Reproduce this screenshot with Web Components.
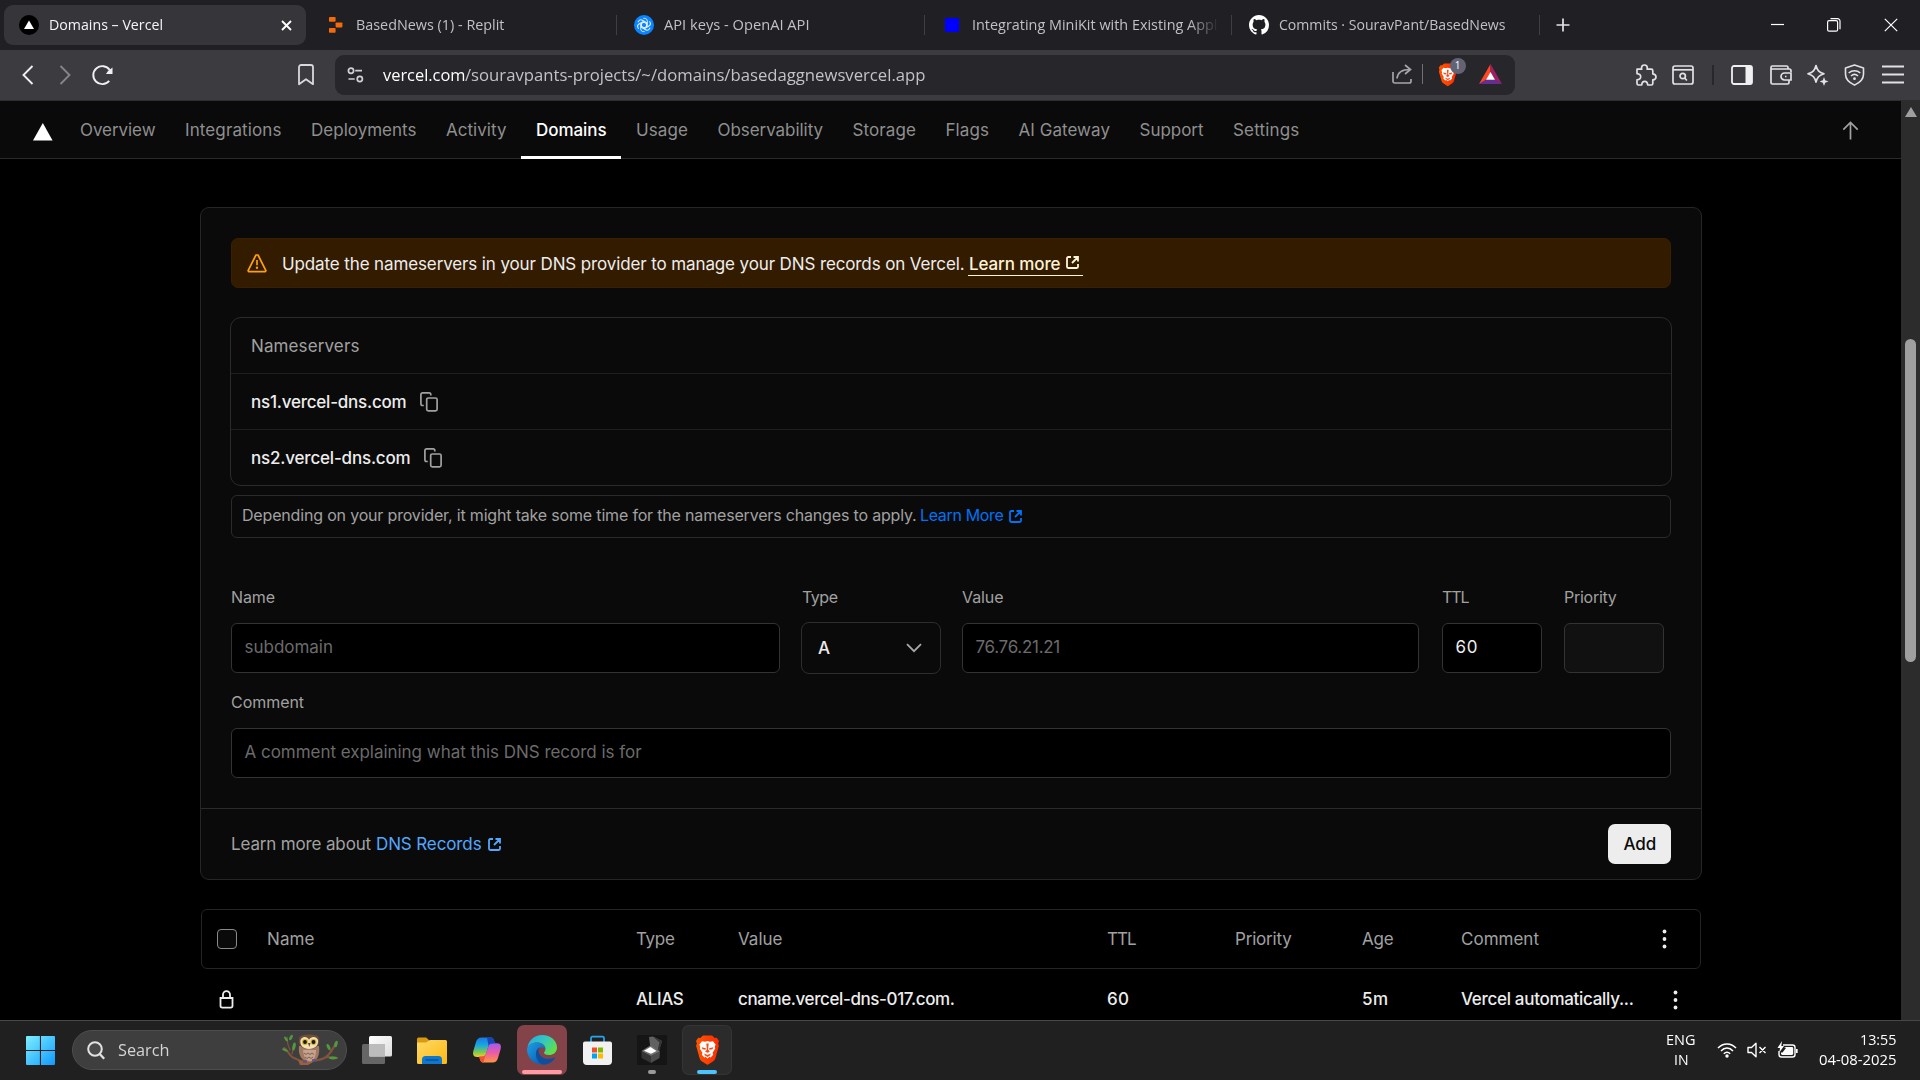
<!DOCTYPE html>
<html lang="en">
<head>
<meta charset="utf-8">
<title>Domains – Vercel</title>
<style>
html,body{margin:0;background:#000;overflow:hidden}
body{width:1920px;height:1080px;font-family:Inter,"Liberation Sans",sans-serif;font-size:17px;color:#ededed}
</style>
</head>
<body>
<desktop-screen></desktop-screen>
<script>
const fitted = [];

/* Text run whose ink fills the given width, by tracking or (mode="scale") by condensing. */
class FitText extends HTMLElement {
  constructor() {
    super();
    this.attachShadow({ mode: 'open' }).innerHTML =
      '<style>:host{display:inline-block;flex:none;white-space:nowrap;line-height:1.3}span{display:inline-block;transform-origin:0 50%}</style><span><slot></slot></span>';
    fitted.push(this);
  }
  fit() {
    const w = parseFloat(this.getAttribute('w'));
    if (!w) return;
    const span = this.shadowRoot.querySelector('span');
    const natural = span.getBoundingClientRect().width;
    const target = w + 0.5;
    if (this.getAttribute('mode') === 'scale') span.style.transform = `scaleX(${target / natural})`;
    else span.style.letterSpacing = (target - natural) / this.textContent.length + 'px';
    this.style.width = w + 'px';
  }
}
customElements.define('fit-text', FitText);

const LION = '<path fill="#fff" d="M7 6.2l3.2.6L12.500 6l2.300.8 3.200-.6 2.600 3.200-.8 2.400.4 1.800-2.600 4.200.6 2-2.600 2.600-1.200-.6-1.900 1.600-1.900-1.600-1.200.6-2.600-2.600.6-2-2.600-4.200.4-1.800-.8-2.400z"/><path fill="#fb4a14" d="M6.600 12.200l4.300 1-.3 1.500-3-.4zM18.400 12.200l-4.300 1 .3 1.500 3-.4zM11.300 8.500h2.400l-.6 6 1.700 2.300-2.300 1-2.300-1 1.700-2.300zM9.200 18.600l3.300 1.500 3.300-1.500-.6 1.700-2.700 1.800-2.700-1.800z"/>';
const SHIELD = 'M5.200 3L8 .6h9L19.800 3l2-.2L24 6l-.9 2.500.8 2.300-3.500 12.400c-.5 1.700-1.500 2.500-2.500 3.200l-4.300 2.900c-.7.5-1.500.5-2.200 0l-4.300-2.900c-1-.7-2-1.500-2.500-3.200L1.100 10.800l.8-2.300L1 6l2.200-3.200z';

const ICONS = {
  vercelDot: [20, 20, '<circle cx="10" cy="10" r="10" fill="#000"/><path d="M10 5.500l5 8.500H5z" fill="#fff"/>'],
  replit: [14, 16, '<g fill="#f56a0a"><rect x="0" y="0" width="6.600" height="4.800" rx=".8"/><rect x="6.600" y="5.400" width="6.800" height="5" rx=".8"/><rect x="0" y="11" width="6.600" height="4.800" rx=".8"/></g>'],
  openai: [20, 20, '<circle cx="10" cy="10" r="10" fill="#0a84ff"/><g fill="none" stroke="#e6f3ff" stroke-width="1">' + [0, 60, 120, 180, 240, 300].map(a => `<path d="M9.400 3.400h1.200c1.700 0 2.700 1.300 2.700 2.800v4.700L10 12.900" transform="rotate(${a} 10 10)"/>`).join('') + '</g>'],
  blue: [14, 14, '<rect width="14" height="14" fill="#00f"/>'],
  github: [20, 20, '<path transform="scale(1.25)" fill="#fff" d="M8 0C3.580 0 0 3.580 0 8c0 3.540 2.290 6.530 5.470 7.590.4.070.55-.17.55-.38 0-.19-.01-.82-.01-1.490-2.010.37-2.530-.49-2.690-.94-.09-.23-.48-.94-.82-1.130-.28-.15-.68-.52-.01-.53.63-.01 1.080.58 1.230.82.72 1.210 1.870.87 2.330.66.07-.52.28-.87.51-1.070-1.780-.2-3.640-.89-3.640-3.950 0-.87.31-1.590.82-2.150-.08-.2-.36-1.020.08-2.120 0 0 .67-.21 2.200.82.64-.18 1.320-.27 2-.27s1.360.09 2 .27c1.530-1.040 2.200-.82 2.200-.82.44 1.100.16 1.920.08 2.120.51.56.82 1.270.82 2.150 0 3.070-1.870 3.750-3.650 3.950.29.25.54.73.54 1.480 0 1.070-.01 1.930-.01 2.200 0 .21.15.46.55.38A8.010 8.010 0 0016 8c0-4.420-3.580-8-8-8z"/>'],
  close: [11, 11, '<path d="M1 1l9 9M10 1L1 10" stroke="#fff" stroke-width="1.900"/>'],
  plus: [14, 14, '<path d="M7 .5v13M.5 7h13" stroke="#e4e4e8" stroke-width="1.700"/>'],
  min: [14, 14, '<path d="M0 6.500h13" stroke="#fff" stroke-width="1.200"/>'],
  restore: [14, 14, '<rect x=".6" y="2.700" width="10" height="10.500" rx="1.500" fill="none" stroke="#fff" stroke-width="1.200"/><path d="M3.500 .7h7a2.500 2.500 0 0 1 2.500 2.500v8" fill="none" stroke="#fff" stroke-width="1.200"/>'],
  x: [14, 14, '<path d="M.8.800l12.400 12.400M13.200.800L.8 13.200" stroke="#fff" stroke-width="1.200"/>'],
  back: [12, 20, '<path d="M10.500 1L1.500 10l9 9" fill="none" stroke="#f0f0f3" stroke-width="1.900"/>'],
  fwd: [12, 20, '<path d="M1.500 1l9 9-9 9" fill="none" stroke="#85858a" stroke-width="1.900"/>'],
  reload: [23, 22, '<path d="M18.200 16.900A9 9 0 1 1 18.700 6" fill="none" stroke="#f0f0f3" stroke-width="1.900"/><path d="M21.500 3.500v6.500h-6.500l2-3z" fill="#f0f0f3"/>'],
  bookmark: [16, 22, '<path d="M1 3.200A2.200 2.200 0 0 1 3.200 1h9.600A2.200 2.200 0 0 1 15 3.200v17L8 15.200 1 20.200z" fill="none" stroke="#d9d9dd" stroke-width="1.800" stroke-linejoin="round"/>'],
  tune: [17, 16, '<g fill="none" stroke="#d0d0d5" stroke-width="1.700"><circle cx="4" cy="3.700" r="2.600"/><path d="M8.200 3.700H15M1.500 12h6.200"/><circle cx="12.800" cy="12" r="2.600"/></g>'],
  share: [20, 20, '<path d="M1 8v9.300A1.700 1.700 0 0 0 2.700 19h14.600a1.700 1.700 0 0 0 1.700-1.700V15M5 14.500C5.500 9 9 5.500 18 5.500M13 1l5.500 4.500L13 10" fill="none" stroke="#a5a5ab" stroke-width="1.700"/>'],
  brave: [25, 30, `<defs><linearGradient id="b" x2="1"><stop offset="0" stop-color="#ff5601"/><stop offset="1" stop-color="#ff2a00"/></linearGradient></defs><path d="${SHIELD}" fill="url(#b)"/>${LION}`],
  bat: [23, 20, '<path d="M11.500 0L0 20l7-4 4.500-7.500z" fill="#ff4724"/><path d="M11.500 0L23 20l-7-4-4.500-7.500z" fill="#9e1f63"/><path d="M0 20h23l-7-4.500H7z" fill="#662d91"/><path d="M11.500 8L7 15.800h9z" fill="#fff"/>'],
  puzzle: [22, 22, '<path d="M2 5.200h4.700c-.8-2.600.8-4.200 2.700-4.200s3.500 1.600 2.700 4.200h4.200a1.500 1.500 0 0 1 1.500 1.500v3.200c2 .3 3.200 1.500 3.200 3s-1.200 2.700-3.200 3v3.600a1.500 1.500 0 0 1-1.500 1.500h-3.600c-.2-2.500-1.300-3.700-3-3.700S6.900 18.500 6.700 21H3.500A1.500 1.500 0 0 1 2 19.500v-3.700c2.300-.1 3.700-1.200 3.700-3S4.300 9.900 2 9.700z" fill="none" stroke="#e2e2e6" stroke-width="1.700" stroke-linejoin="round"/>'],
  panelSearch: [22, 20, '<g fill="none" stroke="#e2e2e6" stroke-width="1.700"><rect x="1" y="1" width="20" height="18" rx="2"/><path d="M1 4.800h20"/><circle cx="10.700" cy="11" r="2.700"/><path d="M12.600 13l2.300 2.500"/></g>'],
  sidebar: [22, 20, '<rect x="1" y="1" width="20" height="18" rx="2" fill="none" stroke="#f0f0f3" stroke-width="1.800"/><path d="M14.500 1h5a1.500 1.500 0 0 1 1.500 1.500v15a1.500 1.500 0 0 1-1.500 1.500h-5z" fill="#f0f0f3"/>'],
  wallet: [22, 20, '<g fill="none" stroke="#e2e2e6" stroke-width="1.700"><path d="M21 7V5.700A1.700 1.700 0 0 0 19.300 4H1M18 4V2.500A1.500 1.500 0 0 0 16.500 1h-14A1.500 1.500 0 0 0 1 2.500v15A1.500 1.500 0 0 0 2.500 19h15a1.500 1.500 0 0 0 1.500-1.500V15"/><path d="M21 8h-6.500a3.200 3.200 0 0 0 0 7H21z"/><path d="M15 11.500h1.500"/></g>'],
  leo: [22, 22, '<path d="M9 1.500c1.300 5 2.700 6.600 8 8.300-5.300 1.700-6.700 3.300-8 8.300-1.300-5-2.700-6.600-8-8.300 5.300-1.700 6.700-3.300 8-8.300z" fill="none" stroke="#e2e2e6" stroke-width="1.700" stroke-linejoin="round"/><path d="M17 13l1.200 3.200 3.200 1.300-3.200 1.300L17 22l-1.200-3.200-3.200-1.300 3.200-1.300z" fill="#e2e2e6"/>'],
  vpn: [21, 22, '<g fill="none" stroke="#e2e2e6" stroke-width="1.600"><path d="M10.500 1l9 2.900v6.300c0 5-3.500 8.300-9 10.900-5.500-2.600-9-5.900-9-10.900V3.900z" stroke-linejoin="round"/><path d="M4.700 9c3.400-3 8.200-3 11.600 0M7 12c2.200-2 4.800-2 7 0"/></g><circle cx="10.500" cy="14.700" r="1.400" fill="#e2e2e6"/>'],
  menu: [22, 19, '<path d="M0 1.500h22M0 9.500h22M0 17.500h22" stroke="#e2e2e6" stroke-width="2"/>'],
  triangle: [20, 18, '<path d="M9.800 0l9.800 17.500H0z" fill="#fff"/>'],
  up: [17, 19, '<path d="M8.500 18.500V1.500M1.300 8.700L8.500 1.500l7.200 7.200" fill="none" stroke="#a1a1a1" stroke-width="1.700"/>'],
  warn: [20, 19, '<path d="M9 1h2l7.900 15.700-.5 1H1.600l-.5-1z" fill="none" stroke="#ff9f0a" stroke-width="1.700" stroke-linejoin="round"/><path d="M10 6v5.200" stroke="#ff9f0a" stroke-width="1.700"/><circle cx="10" cy="13.800" r="1.200" fill="#ff9f0a"/>'],
  ext: [13, 13, '<path d="M5 1H2.200A1.200 1.200 0 0 0 1 2.200v8.600A1.200 1.200 0 0 0 2.200 12h8.600a1.200 1.200 0 0 0 1.200-1.200V8M7.500 1H12v4.500M12 1L6 7" fill="none" stroke="currentColor" stroke-width="1.800"/>'],
  copy: [18, 20, '<g fill="none" stroke="#a1a1a1" stroke-width="1.700"><path d="M3.800 13.500H2.600A1.700 1.700 0 0 1 .9 11.800V2.600A1.700 1.700 0 0 1 2.600.9h6.500a1.700 1.700 0 0 1 1.700 1.700v.9"/><rect x="6.700" y="6" width="10.400" height="12.800" rx="1.600"/></g>'],
  chev: [16, 10, '<path d="M1 1.200l7 7 7-7" fill="none" stroke="#a8a8a8" stroke-width="1.800"/>'],
  lock: [15, 19, '<path d="M1.500 8h12v7.800a1.800 1.800 0 0 1-1.800 1.800H3.300a1.800 1.800 0 0 1-1.800-1.800zM4 8V4.600a3.500 3.500 0 0 1 7 0V8" fill="none" stroke="#ededed" stroke-width="1.800"/>'],
  dots: [5, 20, '<g fill="#ededed"><circle cx="2.500" cy="2.500" r="1.900"/><circle cx="2.500" cy="10" r="1.900"/><circle cx="2.500" cy="17.500" r="1.900"/></g>'],
  start: [29, 29, '<defs><linearGradient id="s" x2="1" y2="1"><stop offset="0" stop-color="#7df0ff"/><stop offset="1" stop-color="#1199ff"/></linearGradient></defs><path d="M1 0h12.900v13.900H0V1a1 1 0 0 1 1-1zM15 0h13a1 1 0 0 1 1 1v12.900H15zM0 15h13.900v14H1a1 1 0 0 1-1-1zM15 15h14v13a1 1 0 0 1-1 1H15z" fill="url(#s)"/>'],
  search: [18, 19, '<circle cx="8" cy="8" r="6.800" fill="#55555580" stroke="#e2e2e2" stroke-width="2"/><path d="M12.700 13l4.500 4.700" stroke="#e2e2e2" stroke-width="2.300"/>'],
  owl: [56, 32, '<g fill="none" stroke="#80533c" stroke-linecap="round"><path d="M2 14c3 1 4 5 7 8s9 4 13 6" stroke-width="2"/><path d="M5 3c0 6 1 9 3 13M12 11l-2 9" stroke-width="1.200"/><path d="M18 28c12-2 19 0 26-5 4-3 6-6 10-14M44 23l11 1" stroke-width="2.200"/><path d="M49 18l-2-4" stroke-width="1.200"/></g><path d="M16 26l11 2 6-1-7 4h-8z" fill="#9c6040"/><g fill="#4f9b3c"><ellipse cx="9" cy="3.500" rx="1.400" ry="3" transform="rotate(28 9 3.500)"/><ellipse cx="4" cy="5" rx="1.200" ry="2.800" transform="rotate(-35 4 5)"/><ellipse cx="12" cy="12.500" rx="1.600" ry="4" transform="rotate(12 12 12.500)"/><ellipse cx="3" cy="16" rx="1.200" ry="3" transform="rotate(-65 3 16)"/><ellipse cx="54" cy="10" rx="1.600" ry="3.400" transform="rotate(15 54 10)"/><ellipse cx="46.500" cy="13" rx="1.500" ry="3.300" transform="rotate(-25 46.500 13)"/><ellipse cx="51" cy="24" rx="4" ry="1.400"/></g><path d="M17 12c-1 8 2 16 10.500 16S38 20 37 12z" fill="#a07a63"/><path d="M21 16c1 8 3 11 7 11s6-5 6-11z" fill="#c5a28b"/><path d="M22 19l2 1.500 2-1.500 2 1.500 2-1.500 2 1.500M23 23l2 1.500 2-1.500 2 1.500 2-1.500" fill="none" stroke="#80604e"/><path d="M17.500 3c3-3.500 17-3.500 19 0 2 6 0 12-9.500 12s-11.500-6-9.500-12z" fill="#6f4d37"/><path d="M18.500 6c2-5 8-3 8.500 0 .5-3 7-5 9 0 1 5-3 9-9 9s-9.500-4-8.500-9z" fill="#f3dfb6"/><circle cx="23" cy="8" r="3" fill="#d3b52c"/><circle cx="31.500" cy="8" r="3" fill="#d3b52c"/><circle cx="23" cy="8" r="1.900" fill="#1b1711"/><circle cx="31.500" cy="8" r="1.900" fill="#1b1711"/><path d="M26 9h2.500l-1.200 4z" fill="#59483c"/><path d="M22 26v3M24 26v3M31 25v3M33 25v3" stroke="#5b4a91" stroke-width="1.500"/>'],
  taskview: [30, 28, '<defs><linearGradient id="tv" x2="1" y2="1"><stop offset="0" stop-color="#fff"/><stop offset="1" stop-color="#ddd"/></linearGradient></defs><rect y="8" width="23" height="20" rx="1.500" fill="#666"/><rect x="7" width="23" height="20.500" rx="1.500" fill="url(#tv)"/><path d="M7 8h16v12.500H8.500A1.500 1.500 0 0 1 7 19z" fill="#bcbcbc"/>'],
  folder: [30, 27, '<defs><linearGradient id="f" x2="1" y2="1"><stop offset="0" stop-color="#ffda65"/><stop offset="1" stop-color="#fcb813"/></linearGradient></defs><path d="M0 2A1.500 1.500 0 0 1 1.500.5h7.700L13 4v6H0z" fill="#d99a10"/><path d="M0 5.500h9L13 3h15.500A1.500 1.500 0 0 1 30 4.500V25.500a1.500 1.500 0 0 1-1.500 1.500h-27A1.500 1.500 0 0 1 0 25.500z" fill="url(#f)"/><path d="M5 27v-4.500A3.500 3.500 0 0 1 8.500 19h13a3.500 3.500 0 0 1 3.500 3.500V27z" fill="#0f77cd"/><path d="M8.500 23h13" stroke="#0a4c8d" stroke-width="1.300"/>'],
  copilot: [28, 26, '<defs><linearGradient id="c1" x2="0" y2="1"><stop offset="0" stop-color="#1d75e8"/><stop offset=".4" stop-color="#17a9e0"/><stop offset=".75" stop-color="#7cc850"/><stop offset="1" stop-color="#f2ce22"/></linearGradient><linearGradient id="c2" x2="0" y2="1"><stop offset="0" stop-color="#a25bf0"/><stop offset=".5" stop-color="#ec5ba6"/><stop offset="1" stop-color="#ff963f"/></linearGradient></defs><path d="M14 .5h4c2 0 2.500 1.500 3 3l1 3h-3c-2 0-3 1-3.600 3L13 17c-.6 2-2 3-4 3H4C0 20-.5 17 .5 13.500L3 5C4 2 5.500.5 8.500.5z" fill="url(#c1)"/><path d="M14 25.500h-4c-2 0-2.500-1.500-3-3L6.200 19.500H9c2 0 3.300-1 4-3L15.500 9c.6-2 2-2.700 4-2.700H24c4 0 4.500 3 3.500 6.200L25 21c-1 3-2.500 4.500-5.500 4.500z" fill="url(#c2)"/><path d="M14 .5h4c2 0 2.500 1.500 3 3l1 3h-3c-2 0-3 1-3.400 2.500z" fill="#1845b8"/><path d="M7 22.500l-.8-3H9c2 0 3-.8 3.600-2.500L10.500 25.400C8.500 25.500 7.500 24 7 22.500z" fill="#f4512d"/>'],
  edge: [30, 30, '<defs><linearGradient id="e1" x2="1" y2=".6"><stop offset="0" stop-color="#24a8e8"/><stop offset=".55" stop-color="#35c8bc"/><stop offset="1" stop-color="#5fe04b"/></linearGradient><linearGradient id="e2" y2="1" x2="1"><stop offset="0" stop-color="#1aa0e6"/><stop offset="1" stop-color="#0a53ab"/></linearGradient></defs><path d="M.5 12C2 5 7.500 0 15 0c9 0 15 6 15 12.500 0 5-4 7.500-8 7.500-3.500 0-5-1.200-5-2.200 0-.8 1.400-1.400 1.400-3.800 0-4-4-6.500-8.400-6.500C5 7.500 2 10 .5 12z" fill="url(#e1)"/><path d="M0 15C0 10 4.500 7.500 10 7.500c4.500 0 8.400 2.500 8.400 6.500 0 0-1.500-2.300-4.400-1.800C10 13 8.500 16.500 9 20c.7 5 5 8.500 10 8.700A15 15 0 0 1 0 15z" fill="url(#e2)"/><path d="M9 20c-.3-3.500 1-6.500 4-7.500-1.600 1.500-1.700 3.500-1 5.500C14 23 20.500 25.500 27.500 22.500c.4 0 .7.500.4.800C25 28 20 30 15.500 29.500 12 28 9.500 24.500 9 20z" fill="#0e4f9d"/>'],
  store: [29, 29, '<path d="M8 6V2a1.300 1.300 0 0 1 1.300-1.300h10.400A1.300 1.300 0 0 1 21 2v4" fill="none" stroke="#24a7f2" stroke-width="1.700"/><path d="M0 7.500A2 2 0 0 1 2 5.500h25a2 2 0 0 1 2 2V25a4 4 0 0 1-4 4H4a4 4 0 0 1-4-4z" fill="#f1f1f1"/><path d="M9 11.500h5v5H9z" fill="#f25022"/><path d="M15 11.500h5v5h-5z" fill="#7fba00"/><path d="M9 17.500h5v5H9z" fill="#00a4ef"/><path d="M15 17.500h5v5h-5z" fill="#ffb900"/>'],
  box: [30, 30, '<rect width="30" height="30" fill="#151515"/><path d="M12 2l4-.5 9 4.500-3 10-9-6z" fill="#616161"/><path d="M16 1.500l9 4.500-3 10-1.500-1 2-7.500z" fill="#343434"/><path d="M4.500 16L14 21v7l-9.500-5z" fill="#343434"/><path d="M23 16.500L14 21v7l8.500-5z" fill="#4c4c4c"/><path d="M14 10l9 6.500-9 4.500-9.500-5z" fill="#707070"/><path d="M13.500 12l6 4-5.500 2.700-7-3z" fill="#fff"/>'],
  wifi: [20, 16, '<g fill="none" stroke="#fff" stroke-width="1.500"><path d="M1 6c5-5.500 13-5.500 18 0M4 9c3.500-4 8.500-4 12 0M6.800 11.700c2-2 4.400-2 6.400 0"/></g><circle cx="10" cy="14" r="1.700" fill="#fff"/>'],
  mute: [20, 16, '<path d="M1 5.500v5h3.500L9 14.700V1.300L4.500 5.500zM12.500 5l6 6M18.500 5l-6 6" fill="none" stroke="#fff" stroke-width="1.400" stroke-linejoin="round"/>'],
  battery: [21, 18, '<path d="M6 4h9.500A2.500 2.500 0 0 1 18 6.500v7a2.500 2.500 0 0 1-2.500 2.500h-11A2.500 2.500 0 0 1 2 13.500V10" fill="none" stroke="#fff" stroke-width="1.400"/><path d="M7 6h8.500l.7 1v6l-1 1H5L4 13v-1.500h1.500L9 7z" fill="#fff"/><path d="M19.800 8v4" stroke="#fff" stroke-width="1.700"/><path d="M5 0L.5 7H3l-.7 4.500L7 5H4.300z" fill="#fff"/>']
};

class UiIcon extends HTMLElement {
  connectedCallback() {
    if (this.shadowRoot) return;
    const [w, h, body] = ICONS[this.getAttribute('name')];
    const s = parseFloat(this.getAttribute('scale') || 1);
    this.attachShadow({ mode: 'open' }).innerHTML =
      `<style>:host{display:block;flex:none}svg{display:block;overflow:visible}</style><svg width="${w * s}" height="${h * s}" viewBox="0 0 ${w} ${h}">${body}</svg>`;
  }
}
customElements.define('ui-icon', UiIcon);

function component(name, css, html) {
  const template = document.createElement('template');
  template.innerHTML = `<style>*{box-sizing:border-box}:host{box-sizing:border-box}${css}</style>${html}`;
  customElements.define(name, class extends HTMLElement {
    constructor() {
      super();
      this.attachShadow({ mode: 'open' }).append(template.content.cloneNode(true));
    }
  });
}

/* ---------- browser chrome ---------- */
component('browser-tab', `
:host{display:flex;align-items:center;height:40px;border-radius:9px;color:#c0c0c5;flex:none}
:host([active]){background:#35353a;color:#f5f5f7}
.icon{display:flex;justify-content:center;width:20px;margin:0 10px 0 15px}
.title{flex:1;display:flex;overflow:hidden;margin-left:-3px;padding-left:3px}
:host([fade]) .title{-webkit-mask:linear-gradient(90deg,#000 220px,transparent 250px)}
`, `<div class="icon"><slot name="icon"></slot></div><div class="title"><slot></slot></div><slot name="close"></slot>`);

component('tab-strip', `
:host{display:flex;height:50px;background:#1f1f24;align-items:center;padding-left:4px;font:14.5px "Open Sans","Noto Sans",sans-serif}
i{width:1px;height:20px;background:#3e3e44;flex:none}
browser-tab{width:302px}
.win{display:flex;align-items:center;margin-left:auto;gap:43px;padding-right:22px}
`, `
<browser-tab active><ui-icon slot="icon" name="vercelDot"></ui-icon><fit-text mode="scale" w="113.5">Domains – Vercel</fit-text><ui-icon slot="close" name="close" style="margin-right:14px"></ui-icon></browser-tab>
<browser-tab style="width:310px;padding-left:5px"><ui-icon slot="icon" name="replit"></ui-icon><fit-text mode="scale" w="148">BasedNews (1) - Replit</fit-text></browser-tab><i></i>
<browser-tab style="width:307px;padding-left:2px"><ui-icon slot="icon" name="openai"></ui-icon><fit-text mode="scale" w="145">API keys - OpenAI API</fit-text></browser-tab><i></i>
<browser-tab style="width:306px;padding-left:2px" fade><ui-icon slot="icon" name="blue"></ui-icon><fit-text mode="scale" w="245">Integrating MiniKit with Existing Appl</fit-text></browser-tab><i></i>
<browser-tab style="width:307px;padding-left:2px"><ui-icon slot="icon" name="github"></ui-icon><fit-text mode="scale" w="226">Commits · SouravPant/BasedNews</fit-text></browser-tab><i></i>
<ui-icon name="plus" style="margin-left:16px"></ui-icon>
<div class="win"><ui-icon name="min" style="margin-right:-1px"></ui-icon><ui-icon name="restore"></ui-icon><ui-icon name="x"></ui-icon></div>`);

component('shield-button', `
:host{display:block;position:relative;flex:none}
b{position:absolute;left:12px;top:-5px;width:16px;height:16px;border-radius:8px;background:#626475;color:#fff;font:10px/15px "Open Sans",sans-serif;text-align:center}
`, `<ui-icon name="brave" scale=".78"></ui-icon><b>1</b>`);

component('address-bar', `
:host{display:flex;align-items:center;width:1180px;height:40px;border-radius:9px;background:#26262b;padding-left:12px;font:17px "Open Sans","Noto Sans",sans-serif;color:#c2c2c7;flex:none}
fit-text{margin-top:1px}
.host{color:#fff;margin-left:19px}
.end{margin-left:auto;display:flex;align-items:center;padding-right:13px}
i{width:1px;height:20px;background:#707077;margin:0 15px 0 10px}
`, `<ui-icon name="tune"></ui-icon><fit-text class="host" mode="scale" w="82">vercel.com</fit-text><fit-text mode="scale" w="460">/souravpants-projects/~/domains/basedaggnewsvercel.app</fit-text>
<div class="end"><ui-icon name="share"></ui-icon><i></i><shield-button></shield-button><ui-icon name="bat" style="margin-left:22px"></ui-icon></div>`);

component('browser-toolbar', `
:host{display:flex;align-items:center;height:51px;padding-bottom:1px;background:#3b3b40;border-bottom:1px solid #2d2d31;padding-left:22px}
.right{display:flex;align-items:center;margin-left:120px;gap:15px}
i{width:2px;height:20px;background:#28282c}
`, `<ui-icon name="back"></ui-icon><ui-icon name="fwd" style="margin-left:25px"></ui-icon><ui-icon name="reload" style="margin-left:20px"></ui-icon><ui-icon name="bookmark" style="margin:0 21px 0 184px"></ui-icon>
<address-bar></address-bar>
<div class="right"><ui-icon name="puzzle"></ui-icon><ui-icon name="panelSearch"></ui-icon><i style="margin:0 2px 0 3px"></i><ui-icon name="sidebar"></ui-icon><ui-icon name="wallet" style="margin-left:2px"></ui-icon><ui-icon name="leo"></ui-icon><ui-icon name="vpn"></ui-icon><ui-icon name="menu" style="margin-left:2px"></ui-icon></div>`);

/* ---------- page ---------- */
component('nav-item', `
:host{display:flex;align-items:center;height:58px;padding:0 15px;color:#8f8f8f;border-bottom:3px solid transparent;border-top:3px solid transparent;flex:none}
:host([active]){color:#fff;border-bottom-color:#fff;font-weight:500}
`, `<slot></slot>`);

component('project-nav', `
:host{display:flex;height:58px;background:#0a0a0a;box-shadow:inset 0 -1px #2a2a2a;align-items:center;padding:0 42px 0 33px;flex:none}
.items{display:flex;margin-left:12px}
`, `<ui-icon name="triangle" style="margin-top:4px"></ui-icon>
<div class="items">
<nav-item><fit-text w="75">Overview</fit-text></nav-item><nav-item><fit-text w="96">Integrations</fit-text></nav-item><nav-item><fit-text w="105">Deployments</fit-text></nav-item><nav-item><fit-text w="60">Activity</fit-text></nav-item><nav-item active><fit-text w="70">Domains</fit-text></nav-item><nav-item><fit-text w="51.5">Usage</fit-text></nav-item><nav-item><fit-text w="105">Observability</fit-text></nav-item><nav-item><fit-text w="63">Storage</fit-text></nav-item><nav-item><fit-text w="43">Flags</fit-text></nav-item><nav-item><fit-text w="91">AI Gateway</fit-text></nav-item><nav-item><fit-text w="63.5">Support</fit-text></nav-item><nav-item><fit-text w="66">Settings</fit-text></nav-item>
</div><ui-icon name="up" style="margin-left:auto"></ui-icon>`);

component('page-scrollbar', `
:host{display:flex;flex-direction:column;align-items:center;width:19px;background:#2c2c2c;flex:none}
.arrow{width:0;border:6px solid transparent;border-top:0;border-bottom:10px solid #a0a0a0;margin-top:6px}
.thumb{width:11px;height:323px;border-radius:6px;background:#9f9f9f;margin-top:222px}
`, `<div class="arrow"></div><div class="thumb"></div>`);

component('warning-note', `
:host{display:flex;align-items:center;height:50px;border-radius:7px;background:#331b00;border:1px solid #3a2001;padding-left:15px;color:#ededed}
.link{display:flex;align-items:center;color:#fff3d8;font-weight:500;border-bottom:1px solid #fff3d8;height:23px;width:115px;padding-left:1px;margin:2px 0 0 4px}
`, `<ui-icon name="warn"></ui-icon><fit-text w="682" style="margin:2px 0 0 15px">Update the nameservers in your DNS provider to manage your DNS records on Vercel.</fit-text><div class="link"><fit-text w="91" style="margin-top:1px">Learn more</fit-text><ui-icon name="ext" style="margin:-2px 0 0 6px"></ui-icon></div>`);

component('ns-row', `
:host{display:flex;align-items:center;gap:14px;height:56px;padding-left:20px;color:#ededed;font-weight:500;border-top:1px solid #1f1f1f}
:host([head]){height:55px;color:#a1a1a1;border-top:0;font-weight:400}
::slotted(fit-text){margin-top:2px}
`, `<slot></slot>`);

component('nameserver-list', `
:host{display:block;height:169px;margin:29px -1px 0;border:1px solid #2b2b2b;border-radius:11px}
`, `<ns-row head><fit-text w="108">Nameservers</fit-text></ns-row><ns-row><fit-text w="155">ns1.vercel-dns.com</fit-text><ui-icon name="copy"></ui-icon></ns-row><ns-row><fit-text w="159">ns2.vercel-dns.com</fit-text><ui-icon name="copy"></ui-icon></ns-row>`);

component('provider-note', `
:host{display:flex;align-items:center;height:43px;margin-top:9px;border:1px solid #2b2b2b;border-radius:6px;padding:0 0 2px 10px;font-size:16px;color:#a1a1a1}
.link{display:flex;align-items:center;color:#0072f5;margin-left:4px;gap:6px}
`, `<fit-text w="674">Depending on your provider, it might take some time for the nameservers changes to apply.</fit-text><div class="link"><fit-text w="83">Learn More</fit-text><ui-icon name="ext" style="margin-top:2px"></ui-icon></div>`);

component('form-field', `
:host{display:flex;flex-direction:column;flex:none;color:#a1a1a1}
.label{height:20px;display:flex;align-items:center;font-size:16px}
.control{display:flex;align-items:center;height:50px;margin-top:16px;border:1px solid #333;border-radius:6px;background:#000;padding:0 0 2px 12.500px;color:#6b6b6b}
:host([filled]) .control{color:#ededed}
:host([disabled]) .control{background:#111}
:host([select]) .control{height:52px;margin:15px -1px -1px;border-radius:8px;background:#0a0a0a;border-color:#2d2d2d;color:#ededed;font-weight:500;padding:0 18px 0 16px;justify-content:space-between}
`, `<div class="label"><slot name="label"></slot></div><div class="control"><slot></slot></div>`);

component('record-form', `
:host{display:block;margin-top:49px}
.row{display:flex}
form-field+form-field{margin-left:22px}
`, `<div class="row">
<form-field style="width:549px"><fit-text slot="label" w="43.5">Name</fit-text><fit-text w="88">subdomain</fit-text></form-field>
<form-field select style="width:138px"><fit-text slot="label" w="35">Type</fit-text><fit-text w="12">A</fit-text><ui-icon name="chev"></ui-icon></form-field>
<form-field style="width:457px"><fit-text slot="label" w="41">Value</fit-text><fit-text w="84">76.76.21.21</fit-text></form-field>
<form-field filled style="width:100px;margin-left:23px"><fit-text slot="label" w="26">TTL</fit-text><fit-text w="22">60</fit-text></form-field>
<form-field disabled style="width:100px"><fit-text slot="label" w="52">Priority</fit-text></form-field>
</div>
<form-field style="margin-top:19px"><fit-text slot="label" w="72.5">Comment</fit-text><fit-text w="396.5">A comment explaining what this DNS record is for</fit-text></form-field>`);

component('card-footer', `
:host{display:flex;align-items:center;height:71px;margin:30px -30px 0;padding:0 30px;border-top:1px solid #2b2b2b;color:#a1a1a1}
.link{display:flex;align-items:center;gap:7px;margin-left:5.500px;color:#52a8ff}
.add{display:flex;align-items:center;justify-content:center;margin-left:auto;width:63px;height:40px;border-radius:7px;background:#ededed;color:#0a0a0a;font-weight:500}
`, `<fit-text w="139.500">Learn more about</fit-text><div class="link"><fit-text w="105">DNS Records</fit-text><ui-icon name="ext"></ui-icon></div><div class="add"><fit-text w="32">Add</fit-text></div>`);

component('domain-card', `
:host{display:block;flex:none;width:1502px;height:673px;margin:48px 0 0 200px;border:1px solid #262626;border-radius:9px;background:#0a0a0a;padding:30px}
`, `<warning-note></warning-note><nameserver-list></nameserver-list><provider-note></provider-note><record-form></record-form><card-footer></card-footer>`);

component('record-row', `
:host{display:grid;flex:none;grid-template-columns:50px 369px 102px 369px 128px 127px 99px 203px 5px;align-items:center;height:61px;margin-left:201px;width:1500px;padding-left:16px;color:#ededed;font-weight:500}
:host([head]){height:60px;margin-top:29px;border:1px solid #242424;border-radius:6px;padding-left:15px;color:#a1a1a1;font-weight:400;grid-template-columns:50px 369px 102px 369px 128px 127px 99px 201px 5px}
`, `<slot></slot>`);

component('check-box', `:host{display:block;width:20px;height:20px;border:1px solid #8a8a8a;border-radius:4px;background:#0a0a0a}`, ``);

component('browser-page', `
:host{display:flex;height:919px;background:#000}
main{flex:1;display:flex;flex-direction:column;overflow:hidden}
`, `<main><project-nav></project-nav><domain-card></domain-card>
<record-row head><check-box></check-box><fit-text w="47">Name</fit-text><fit-text w="38">Type</fit-text><fit-text w="44">Value</fit-text><fit-text w="28">TTL</fit-text><fit-text w="56">Priority</fit-text><fit-text w="31">Age</fit-text><fit-text w="77.500">Comment</fit-text><ui-icon name="dots"></ui-icon></record-row>
<record-row><ui-icon name="lock" style="margin-left:2px"></ui-icon><span></span><fit-text w="47">ALIAS</fit-text><fit-text w="216">cname.vercel-dns-017.com.</fit-text><fit-text w="22">60</fit-text><span></span><fit-text w="26">5m</fit-text><fit-text w="172">Vercel automatically...</fit-text><ui-icon name="dots" style="margin-left:9px"></ui-icon></record-row>
</main><page-scrollbar></page-scrollbar>`);

/* ---------- taskbar ---------- */
component('task-app', `
:host{display:flex;align-items:center;justify-content:center;position:relative;width:50px;height:50px;border-radius:7px;flex:none}
:host([alert]){background:#844349}
:host([open]){background:#2b2b2b;box-shadow:inset 0 0 0 1px #343434}
i{position:absolute;bottom:1px;height:4px;border-radius:2px;width:0}
:host([alert]) i{width:40px;background:#ff9aa4}
:host([open]) i{width:20px;background:#4cc2ff}
:host([idle]) i{width:8px;background:#9a9a9a}
`, `<slot></slot><i></i>`);

component('search-pill', `
:host{display:flex;align-items:center;width:275px;height:40px;border-radius:20px;background:#3e3e3e;border:1px solid #4e4e4e;padding:0 7px 0 14px;color:#d4d4d4;font-size:17px}
`, `<ui-icon name="search"></ui-icon><fit-text mode="scale" w="51" style="margin:1px 0 0 13px">Search</fit-text><ui-icon name="owl" style="margin-left:auto;margin-right:1px"></ui-icon>`);

component('system-tray', `
:host{display:flex;align-items:center;margin-left:auto;padding-right:24px;font-size:14.500px;color:#fff}
.col{display:flex;flex-direction:column;align-items:center}
.end{align-items:flex-end;margin-left:21px}
.col fit-text{line-height:20px}
.icons{display:flex;align-items:center;gap:10px;margin-left:22px}
`, `<div class="col"><fit-text mode="scale" w="29">ENG</fit-text><fit-text mode="scale" w="14">IN</fit-text></div><div class="icons"><ui-icon name="wifi"></ui-icon><ui-icon name="mute"></ui-icon><ui-icon name="battery"></ui-icon></div><div class="col end"><fit-text mode="scale" w="36">13:55</fit-text><fit-text mode="scale" w="77">04-08-2025</fit-text></div>`);

component('task-bar', `
:host{display:flex;align-items:center;height:60px;background:#202020;border-top:1px solid #484848;padding:0 0 1px 26px;font-family:"Open Sans","Noto Sans",sans-serif}
.apps{display:flex;gap:5px;margin-left:5px}
`, `<ui-icon name="start"></ui-icon><search-pill style="margin-left:17px"></search-pill>
<div class="apps"><task-app><ui-icon name="taskview"></ui-icon></task-app><task-app><ui-icon name="folder"></ui-icon></task-app><task-app><ui-icon name="copilot"></ui-icon></task-app><task-app alert><ui-icon name="edge"></ui-icon></task-app><task-app><ui-icon name="store"></ui-icon></task-app><task-app idle><ui-icon name="box"></ui-icon></task-app><task-app open><ui-icon name="brave"></ui-icon></task-app></div>
<system-tray></system-tray>`);

component('desktop-screen', `:host{display:block;width:1920px;height:1080px}`,
  `<tab-strip></tab-strip><browser-toolbar></browser-toolbar><browser-page></browser-page><task-bar></task-bar>`);

fitted.forEach(el => { if (el.isConnected) el.fit(); });
</script>
</body>
</html>
